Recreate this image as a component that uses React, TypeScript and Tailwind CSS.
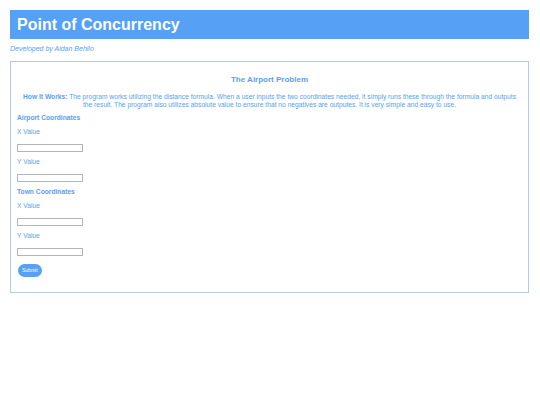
import React from 'react'

const Field = ({ label }: { label: string }) => (
  <div>
    <p className="text-[6.7px] leading-[9px] mt-[5px]">{label}</p>
    <input type="text" className="block mt-[8px] w-[66px] h-[8px] border border-[#b5b5b5] bg-white" />
  </div>
)

const App = () => {
  return (
    <div className="min-h-[405px] bg-white px-[10px] pt-[10px] text-[#5a9ef2]" style={{ fontFamily: '"Liberation Sans", Arial, sans-serif' }}>
      {/* Header */}
      <div className="h-[29px] bg-[#56a0f5] flex items-center pl-[7px] w-[519px]">
        <h1 className="text-white text-[16px] font-bold leading-none">Point of Concurrency</h1>
      </div>

      <p className="italic text-[7px] leading-[9px] mt-[5px]">Developed by Aidan Behilo</p>

      {/* Main box */}
      <div className="mt-[8px] w-[519px] border border-[#b3cbe3] px-[6px] pt-[13px] pb-[15px]">
        <h2 className="text-center font-bold text-[8px] leading-[10px]">The Airport Problem</h2>
        <p className="text-center text-[6.7px] leading-[7.5px] mt-[8px] px-[4px]">
          <b>How It Works:</b> The program works utilizing the distance formula. When a user inputs the two coordinates needed, it simply runs these through the formula and outputs the result. The program also utilizes absolute value to ensure that no negatives are outputes. It is very simple and easy to use.
        </p>

        <h3 className="font-bold text-[6.7px] leading-[9px] mt-[5px]">Airport Coordinates</h3>
        <Field label="X Value" />
        <Field label="Y Value" />

        <h3 className="font-bold text-[6.7px] leading-[9px] mt-[5px]">Town Coordinates</h3>
        <Field label="X Value" />
        <Field label="Y Value" />

        <button className="block mt-[8px] ml-[1px] h-[13px] px-[4px] rounded-full bg-[#56a0f5] text-white text-[5px] leading-none">Submit</button>
      </div>
    </div>
  )
}

export default App
